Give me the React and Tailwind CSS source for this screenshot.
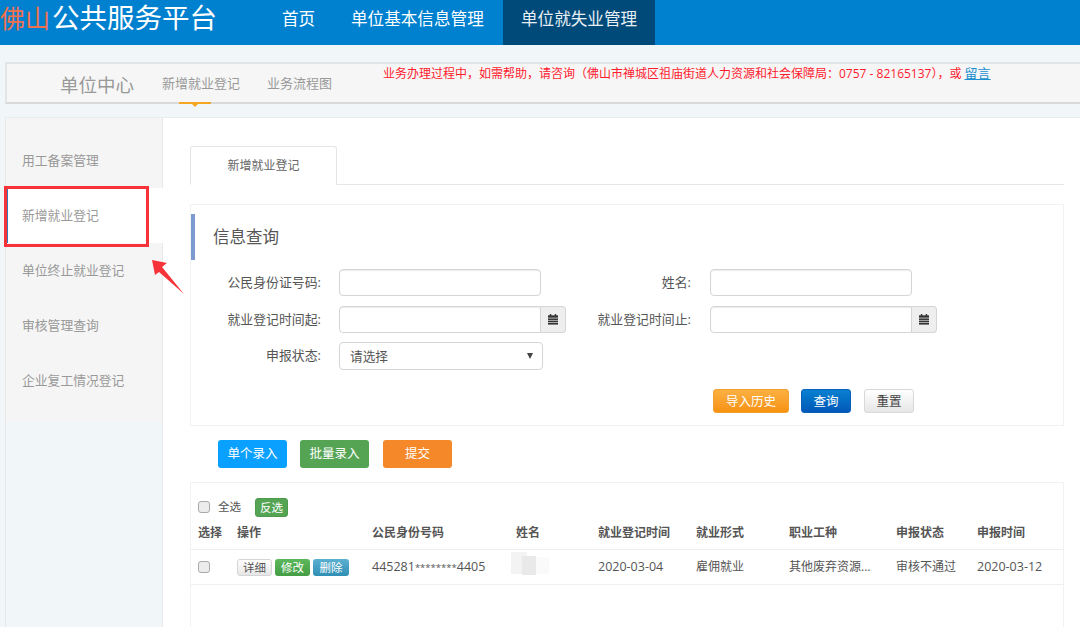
import { useState } from "react";

const menu = ["用工备案管理", "新增就业登记", "单位终止就业登记", "审核管理查询", "企业复工情况登记"];
const cols = "grid grid-cols-[39px_135px_144px_82px_98px_93px_107px_81px_1fr] pl-[7px]";
const heads = ["选择", "操作", "公民身份号码", "姓名", "就业登记时间", "就业形式", "职业工种", "申报状态", "申报时间"];

function CalendarIcon() {
  return (
    <svg width="10" height="11" viewBox="0 0 11 12" fill="#333">
      <rect x="2" y="0" width="1.6" height="2.4" />
      <rect x="7.4" y="0" width="1.6" height="2.4" />
      <rect x="0" y="1.4" width="11" height="2.6" />
      <rect x="0" y="4.8" width="11" height="1.7" />
      <rect x="0" y="7.2" width="11" height="1.7" />
      <rect x="0" y="9.6" width="11" height="2" />
    </svg>
  );
}

function Label({ children, className }) {
  return <label className={`text-right text-[12.9px] text-[#555] ${className}`}>{children}</label>;
}

function TextInput({ className = "" }) {
  return <input className={`h-[27px] w-[202px] rounded-[4px] border border-[#d5d5d5] bg-white shadow-[inset_0_1px_1px_rgba(0,0,0,0.08)] ${className}`} />;
}

function DateInput() {
  return (
    <div className="flex h-[27px] w-[227px]">
      <input className="h-full w-[202px] rounded-l-[4px] border border-[#d5d5d5] bg-white shadow-[inset_0_1px_1px_rgba(0,0,0,0.08)]" />
      <span className="flex h-full flex-1 items-center justify-center rounded-r-[4px] border border-l-0 border-[#d5d5d5] bg-[#eeeeee]">
        <CalendarIcon />
      </span>
    </div>
  );
}

function Checkbox() {
  return <input type="checkbox" className="block h-[12px] w-[12px] appearance-none rounded-[3px] border border-[#a9a9a9] bg-[#ececec]" />;
}

export default function App() {
  const [status, setStatus] = useState("");

  return (
    <div className="relative h-[627px] w-[1080px] overflow-hidden bg-[#f1f6f9] font-['Open_Sans','Noto_Sans_CJK_SC',sans-serif]">
      {/* Header */}
      <header className="flex h-[45px] bg-[#0081cf] text-white">
        <div className="w-[282px] shrink-0 -translate-y-[5px] whitespace-nowrap text-[27.5px] leading-[45px]">
          <span className="mr-[2px] text-[25px] text-[#f0714f]">佛山</span>公共服务平台
        </div>
        <nav className="flex text-[16.6px] leading-[38px]">
          <a className="w-[69px]">首页</a>
          <a className="w-[152px]">单位基本信息管理</a>
          <a className="h-[45px] w-[152px] bg-[#004a7a] pl-[18px] text-[#e6eef3]">单位就失业管理</a>
        </nav>
      </header>

      {/* Sub header */}
      <div className="ml-[5px] mt-[17px] flex h-[42px] border-y-2 border-l-2 border-y-[#e2e5e5] border-b-[#d9d9d9] border-l-[#e2e5e5] bg-[#f6f6f6] text-[#999]">
        <div className="ml-[53px] w-[102px] text-[18.5px] leading-[41px]">单位中心</div>
        <div className="relative w-[105px] text-[13px] leading-[39px]">
          新增就业登记
          <span className="absolute bottom-[-2px] left-[17px] h-[2px] w-[32px] bg-[#f5a623]" />
          <span className="absolute bottom-[-5px] left-[30px] h-0 w-0 border-x-[3px] border-t-[3px] border-x-transparent border-t-[#f5a623]" />
        </div>
        <div className="w-[116px] text-[13px] leading-[39px]">业务流程图</div>
        <div className="whitespace-nowrap pt-[1px] text-[12px] leading-[16px] text-[#ff1a2e]">
          业务办理过程中，如需帮助，请咨询（佛山市禅城区祖庙街道人力资源和社会保障局：0757 - 82165137），或{" "}
          <a className="text-[13px] text-[#1b8fd0] underline">留言</a>
        </div>
      </div>

      <div className="ml-[5px] mt-[13px] flex h-[510px] border-t border-[#e9ecec]">
        {/* Sidebar */}
        <aside className="w-[158px] shrink-0 border-x border-[#e8e8e8]">
          <ul className="h-[304px] bg-[#f5f5f5] pt-[15px] text-[12.8px] text-[#999]">
            {menu.map((m, i) => (
              <li
                key={m}
                className={`flex h-[55px] items-center pl-[16px] ${i === 1 ? "-mr-px border-l-2 border-[#337ab7] bg-white !pl-[14px]" : ""}`}
              >
                {m}
              </li>
            ))}
          </ul>
        </aside>

        {/* Main */}
        <main className="flex-1 bg-white pl-[27px] pr-[16px] pt-[28px]">
          <div className="h-[39px] border-b border-[#e5e5e5]">
            <div className="h-[39px] w-[147px] rounded-t-[3px] border border-b-white border-[#e5e5e5] bg-white text-center text-[12px] leading-[38px] text-[#666]">
              新增就业登记
            </div>
          </div>

          {/* Query panel */}
          <section className="mt-[19px] h-[222px] border border-[#f2f2f2]">
            <div className="mt-[9px] h-[46px] border-l-4 border-[#7b9bd0] pl-[18px] text-[16.5px] leading-[46px] text-[#555]">
              信息查询
            </div>
            <div className="mt-[9px] grid grid-cols-[389px_1fr] gap-y-[10px] leading-[27px]">
              <div className="flex">
                <Label className="w-[130px]">公民身份证号码:</Label>
                <TextInput className="ml-[18px]" />
              </div>
              <div className="flex">
                <Label className="w-[111px]">姓名:</Label>
                <TextInput className="ml-[19px]" />
              </div>
              <div className="flex">
                <Label className="w-[130px]">就业登记时间起:</Label>
                <div className="ml-[18px]"><DateInput /></div>
              </div>
              <div className="flex">
                <Label className="w-[111px]">就业登记时间止:</Label>
                <div className="ml-[19px]"><DateInput /></div>
              </div>
              <div className="col-span-2 -mt-px flex">
                <Label className="w-[130px]">申报状态:</Label>
                <div className="relative ml-[18px] h-[28px] w-[204px]">
                  <select
                    value={status}
                    onChange={(e) => setStatus(e.target.value)}
                    className="h-full w-full appearance-none rounded-[4px] border border-[#d5d5d5] bg-white pl-[10px] text-[12.7px] text-[#555]"
                  >
                    <option value="">请选择</option>
                  </select>
                  <span className="absolute right-[10px] top-[11px] h-0 w-0 border-x-[3px] border-t-[6px] border-x-transparent border-t-[#444]" />
                </div>
              </div>
            </div>
            <div className="mr-[149px] mt-[19px] flex justify-end text-[12.5px] leading-[23px]">
              <button className="h-[24px] w-[76px] rounded-[3px] border border-[#f0a030] bg-gradient-to-b from-[#fbb040] to-[#f7920f] text-white">导入历史</button>
              <button className="ml-[12px] h-[24px] w-[50px] rounded-[3px] border border-[#0860b8] bg-gradient-to-b from-[#0a80d0] to-[#0358b8] text-white">查询</button>
              <button className="ml-[13px] h-[24px] w-[50px] rounded-[3px] border border-[#d8d8d8] bg-gradient-to-b from-white to-[#e6e6e6] text-[#444]">重置</button>
            </div>
          </section>

          {/* Action buttons */}
          <div className="mt-[14px] flex gap-[13px] pl-[28px] text-[12.5px] text-white">
            <button className="h-[28px] w-[69px] rounded-[3px] bg-[#0aa0ff]">单个录入</button>
            <button className="h-[28px] w-[69px] rounded-[3px] bg-[#55a454]">批量录入</button>
            <button className="ml-px h-[28px] w-[69px] rounded-[3px] bg-[#f5892a]">提交</button>
          </div>

          {/* Table */}
          <section className="relative mt-[14px] h-[160px] border border-[#f2f2f2]">
            <div className="flex h-[36px] items-center pl-[7px] pt-[12px] text-[11.5px] text-[#555]">
              <Checkbox />
              <span className="ml-[8px]">全选</span>
              <span className="ml-[14px] h-[19px] w-[33px] rounded-[3px] border border-[#4c9a4c] bg-[#55a454] text-center leading-[17px] text-white">反选</span>
            </div>
            <div className={`${cols} h-[31px] items-center border-b border-[#eeeeee] pb-[3px] text-[12px] font-semibold text-[#555]`}>
              {heads.map((h) => <div key={h} className="whitespace-nowrap">{h}</div>)}
            </div>
            <div className={`${cols} h-[35px] items-center border-b border-[#f0f0f0] text-[12px] text-[#555]`}>
              <div><Checkbox /></div>
              <div className="flex gap-[3px] text-[11.5px] leading-[15px]">
                <button className="h-[17px] w-[35px] rounded-[3px] border border-[#d5d5d5] bg-gradient-to-b from-white to-[#e6e6e6] text-[#555]">详细</button>
                <button className="h-[17px] w-[35px] rounded-[3px] bg-gradient-to-b from-[#5cb85c] to-[#449d44] text-white">修改</button>
                <button className="h-[17px] w-[36px] rounded-[3px] bg-gradient-to-b from-[#5bb0d0] to-[#2f8fb5] text-white">删除</button>
              </div>
              <div className="whitespace-nowrap text-[12.5px]">445281<span className="text-[9.5px]">********</span>4405</div>
              <div />
              <div className="text-[12.5px]">2020-03-04</div>
              <div>雇佣就业</div>
              <div className="whitespace-nowrap">其他废弃资源...</div>
              <div>审核不通过</div>
              <div className="text-[12.5px]">2020-03-12</div>
            </div>
            {/* name is blurred out in the screenshot */}
            <span className="absolute left-[320px] top-[69px] h-[22px] w-[16px] bg-[#f3f3f3]" />
            <span className="absolute left-[331px] top-[73px] h-[19px] w-[14px] bg-[#e9e9e9]" />
            <span className="absolute left-[345px] top-[74px] h-[17px] w-[13px] bg-[#fafafa]" />
          </section>
        </main>
      </div>

      {/* Annotations over the page */}
      <div className="absolute left-[4px] top-[186px] h-[61px] w-[145px] border-[3px] border-[#f53338]" />
      <svg className="absolute left-[150px] top-[258px]" width="36" height="38" viewBox="0 0 36 38">
        <polygon points="2,2 17,5 12,9 34,36 9,14 5,17" fill="#f53338" />
      </svg>
    </div>
  );
}
